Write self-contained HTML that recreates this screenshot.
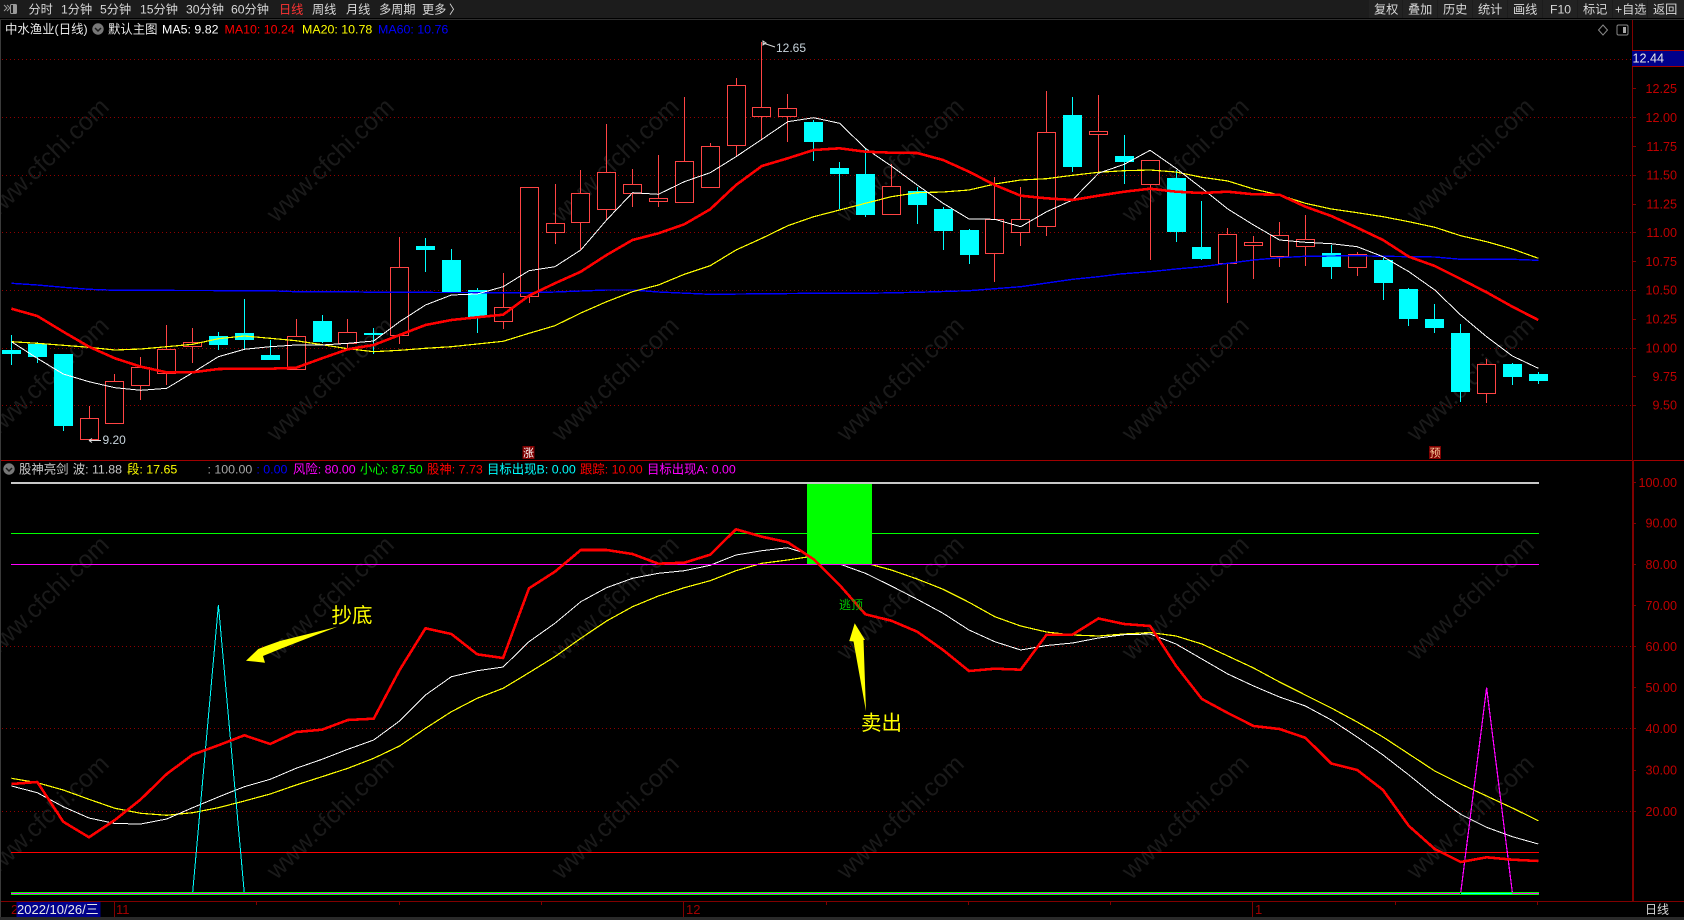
<!DOCTYPE html>
<html lang="zh">
<head>
<meta charset="utf-8">
<title>中水渔业 日线</title>
<style>
html,body{margin:0;padding:0;background:#000;width:1684px;height:920px;overflow:hidden}
svg{display:block;position:absolute;left:0;top:0}
text{font-family:"Liberation Sans","Noto Sans CJK SC",sans-serif;font-size:12px;white-space:pre}
.t text{fill:#d8d8d8;font-size:12.2px}
.ax text{fill:#c00000;font-size:12.6px;text-anchor:end}
.wm text{fill:#1a1a1a;font-size:25px;text-anchor:middle}
.ti text{font-size:12.4px}
</style>
</head>
<body>
<svg width="1684" height="920" viewBox="0 0 1684 920" xmlns="http://www.w3.org/2000/svg">
<rect width="1684" height="920" fill="#000"/>
<!-- watermark -->
<g class="wm">
<text transform="translate(51 166) rotate(-44)">www.cfchi.com</text>
<text transform="translate(336 166) rotate(-44)">www.cfchi.com</text>
<text transform="translate(621 166) rotate(-44)">www.cfchi.com</text>
<text transform="translate(906 166) rotate(-44)">www.cfchi.com</text>
<text transform="translate(1191 166) rotate(-44)">www.cfchi.com</text>
<text transform="translate(1476 166) rotate(-44)">www.cfchi.com</text>
<text transform="translate(51 385) rotate(-44)">www.cfchi.com</text>
<text transform="translate(336 385) rotate(-44)">www.cfchi.com</text>
<text transform="translate(621 385) rotate(-44)">www.cfchi.com</text>
<text transform="translate(906 385) rotate(-44)">www.cfchi.com</text>
<text transform="translate(1191 385) rotate(-44)">www.cfchi.com</text>
<text transform="translate(1476 385) rotate(-44)">www.cfchi.com</text>
<text transform="translate(51 604) rotate(-44)">www.cfchi.com</text>
<text transform="translate(336 604) rotate(-44)">www.cfchi.com</text>
<text transform="translate(621 604) rotate(-44)">www.cfchi.com</text>
<text transform="translate(906 604) rotate(-44)">www.cfchi.com</text>
<text transform="translate(1191 604) rotate(-44)">www.cfchi.com</text>
<text transform="translate(1476 604) rotate(-44)">www.cfchi.com</text>
<text transform="translate(51 823) rotate(-44)">www.cfchi.com</text>
<text transform="translate(336 823) rotate(-44)">www.cfchi.com</text>
<text transform="translate(621 823) rotate(-44)">www.cfchi.com</text>
<text transform="translate(906 823) rotate(-44)">www.cfchi.com</text>
<text transform="translate(1191 823) rotate(-44)">www.cfchi.com</text>
<text transform="translate(1476 823) rotate(-44)">www.cfchi.com</text>
</g>
<!-- grid -->
<path d="M2 59.5H1632M2 117.5H1632M2 175.5H1632M2 232.5H1632M2 290.5H1632M2 348.5H1632M2 405.5H1632M2 646.5H1632M2 728.5H1632M2 811.5H1632" stroke="#900000" stroke-width="1" stroke-dasharray="1 3" fill="none" shape-rendering="crispEdges"/>
<!-- candles -->
<g shape-rendering="crispEdges">
<path fill="none" stroke="#00ffff" d="M11.5 335V365M37.5 342V363M63.5 354V431M218.5 332V350M244.5 299V349M270.5 340V360M322.5 315V343M373.5 328V354M425.5 238V272M451.5 249V293M477.5 288V333M813.5 120V161M839.5 162V209M865.5 148V217M917.5 187V224M943.5 207V250M969.5 229V264M1072.5 97V172M1124.5 135V184M1176.5 170V242M1201.5 201V260M1331.5 245V279M1383.5 258V300M1408.5 288V326M1434.5 304V333M1460.5 324V402M1512.5 363V385M1538.5 372V384"/>
<path fill="#00ffff" d="M2 350h19v4h-19zM28 344h19v13h-19zM54 354h19v72h-19zM209 336h19v9h-19zM235 333h19v7h-19zM261 355h19v5h-19zM313 321h19v21h-19zM364 333h19v2h-19zM416 246h19v4h-19zM442 260h19v33h-19zM468 290h19v27h-19zM804 122h19v20h-19zM830 168h19v6h-19zM856 174h19v41h-19zM908 191h19v14h-19zM934 209h19v22h-19zM960 230h19v25h-19zM1063 115h19v52h-19zM1115 156h19v6h-19zM1167 178h19v54h-19zM1192 247h19v12h-19zM1322 253h19v14h-19zM1374 260h19v23h-19zM1399 289h19v30h-19zM1425 319h19v9h-19zM1451 333h19v59h-19zM1503 364h19v13h-19zM1529 374h19v7h-19z"/>
<path fill="none" stroke="#ff4444" d="M89.5 406V439M114.5 374V423M140.5 357V400M166.5 325V385M192.5 328V363M296.5 319V369M347.5 319V349M399.5 237V344M503.5 273V329M529.5 187V303M555.5 184V244M580.5 170V250M606.5 124V220M632.5 169V207M658.5 155V207M684.5 97V202M710.5 143V187M736.5 78V157M761.5 42V140M787.5 94V142M891.5 164V214M994.5 177V282M1020.5 187V246M1046.5 91V236M1098.5 95V173M1150.5 160V260M1227.5 228V303M1253.5 236V279M1279.5 222V267M1305.5 215V266M1357.5 252V276M1486.5 359V403"/>
<path fill="#000" stroke="#ff4444" stroke-width="1" d="M80.5 418.5h18v21h-18zM105.5 381.5h18v42h-18zM131.5 367.5h18v18h-18zM157.5 349.5h18v24h-18zM183.5 342.5h18v4h-18zM287.5 336.5h18v33h-18zM338.5 332.5h18v11h-18zM390.5 267.5h18v68h-18zM494.5 307.5h18v14h-18zM520.5 187.5h18v109h-18zM546.5 223.5h18v9h-18zM571.5 193.5h18v29h-18zM597.5 172.5h18v37h-18zM623.5 184.5h18v9h-18zM649.5 198.5h18v3h-18zM675.5 161.5h18v41h-18zM701.5 146.5h18v41h-18zM727.5 85.5h18v60h-18zM752.5 107.5h18v9h-18zM778.5 108.5h18v8h-18zM882.5 186.5h18v28h-18zM985.5 219.5h18v34h-18zM1011.5 219.5h18v13h-18zM1037.5 132.5h18v94h-18zM1089.5 131.5h18v3h-18zM1141.5 160.5h18v24h-18zM1218.5 234.5h18v29h-18zM1244.5 242.5h18v3h-18zM1270.5 235.5h18v21h-18zM1296.5 239.5h18v7h-18zM1348.5 254.5h18v13h-18zM1477.5 364.5h18v29h-18z"/>
</g>
<!-- upper MAs -->
<g fill="none" stroke-linejoin="round" shape-rendering="crispEdges">
<polyline stroke="#0000ff" stroke-width="1.4" points="11.4,283.3 37.3,285 63.2,287.3 89,289.3 114.9,290.3 270,290.7 296,291.7 348,291.7 374,292.3 529,292.7 555,292 606.6,290 632.5,290 658.4,292 710.2,294.3 813.7,293.3 865.4,293.3 917.2,292.3 969,290.7 1020.7,286.7 1072.5,279.3 1098.4,276.7 1120,274 1150.1,271.7 1176,269 1201.9,266.7 1227.8,263.3 1253.6,260 1279.5,257.7 1305.4,256.3 1357.2,255.7 1383,256.3 1434.8,257 1460.7,259.3 1512.4,259.3 1538.3,260.3"/>
<polyline stroke="#ffff00" stroke-width="1.2" points="11.4,341.7 37.3,343.3 63.2,345.3 89,347.3 114.9,350 140.8,349 166.7,346.7 192.6,344.3 218.4,338.7 244.3,336 270.2,338.3 296.1,340.7 322,344.7 347.8,348.7 373.7,351.7 399.6,350.3 425.5,348.3 451.4,346.7 477.2,344 503.1,341.3 529,333.3 554.9,325.7 580.8,313 606.6,301.7 632.5,291.7 658.4,285 684.3,274.3 710.2,265.7 736,250 761.9,238.3 787.8,225.7 813.7,216.7 839.6,210 865.4,203.3 891.3,196.7 917.2,192.7 943.1,192 969,190 994.8,184 1020.7,180 1046.6,178.7 1072.5,175.3 1098.4,172.3 1124.2,170.7 1150.1,170 1176,172 1201.9,177.3 1227.8,181 1253.6,189 1279.5,195 1305.4,203.3 1331.3,209 1357.2,212.7 1383,216.7 1408.9,221.7 1434.8,227.3 1460.7,235.7 1486.6,241.7 1512.4,249 1538.3,258.3"/>
<polyline stroke="#ffffff" stroke-width="1" points="11.4,341.7 37.3,358.3 63.2,374 89,381.7 114.9,387.7 140.8,390.3 166.7,388.3 192.6,372.7 218.4,356.7 244.3,349.3 270.2,346.7 296.1,345 322,345 347.8,343.3 373.7,341 399.6,321.7 425.5,305 451.4,295 477.2,294 503.1,286.7 529,270.7 554.9,266.7 580.8,250 606.6,220 632.5,192.7 658.4,194.3 684.3,181.7 710.2,172.7 736,156.7 761.9,139.3 787.8,121.7 813.7,117.7 839.6,123.3 865.4,148.3 891.3,166 917.2,185 943.1,203.3 969,219 994.8,219.3 1020.7,226.7 1046.6,211.7 1072.5,200 1098.4,173.3 1124.2,164.3 1150.1,150.3 1176,168.3 1201.9,188.3 1227.8,209 1253.6,225 1279.5,240 1305.4,242.3 1331.3,243.7 1357.2,246.7 1383,256.7 1408.9,271.7 1434.8,290 1460.7,315 1486.6,336.7 1512.4,356 1538.3,368.3"/>
<polyline stroke="#ff0000" stroke-width="2.6" points="11.4,308.7 37.3,316 63.2,331.7 89,346.7 114.9,358.3 140.8,366.7 166.7,372.3 192.6,372.3 218.4,369 244.3,368.7 270.2,368.7 296.1,367.7 322,358.3 347.8,349.3 373.7,345 399.6,335 425.5,325 451.4,320 477.2,317.3 503.1,314.7 529,295.7 554.9,283.3 580.8,271.7 606.6,255 632.5,240 658.4,233.3 684.3,224.3 710.2,209.3 736,185 761.9,166 787.8,158.3 813.7,150 839.6,148.3 865.4,151.7 891.3,152.7 917.2,153 943.1,160 969,171.7 994.8,185 1020.7,195.7 1046.6,198.3 1072.5,200 1098.4,195.7 1124.2,191.7 1150.1,188.7 1176,191.7 1201.9,193 1227.8,191.7 1253.6,194.3 1279.5,194.7 1305.4,206.7 1331.3,216 1357.2,227.7 1383,240 1408.9,256.7 1434.8,266 1460.7,279 1486.6,292.3 1512.4,306.7 1538.3,320"/>
</g>
<!-- hi/lo labels -->
<path d="M766 43l-3 -2v4zM763 43l12 4" stroke="#d8d8d8" fill="none"/>
<text x="776" y="52" fill="#c8d4dc">12.65</text>
<path d="M89 440.5H101M89 440.5l3 -2M89 440.5l3 2" stroke="#e0e0e0" fill="none"/>
<text x="102.5" y="444" fill="#c8d4dc">9.20</text>
<!-- markers -->
<rect x="522.5" y="446" width="12" height="13" fill="#800000"/>
<text x="523" y="456.5" fill="#fff" style="font-size:11px">涨</text>
<rect x="1429" y="446" width="12" height="13" fill="#800000"/>
<text x="1429.5" y="456.5" fill="#ffd0a0" style="font-size:11px">预</text>
<!-- lower pane -->
<g shape-rendering="crispEdges" fill="none">
<path stroke="#c8c8c8" stroke-width="2" d="M11 483H1539"/>
<path stroke="#00ff00" stroke-width="1" d="M11 533.5H1539"/>
<polyline stroke="#ffff00" stroke-width="1.2" points="11.4,778.3 37.3,782.7 63.2,790 89,799.3 114.9,808.3 140.8,813.3 166.7,815.3 192.6,812.7 218.4,807.7 244.3,801 270.2,794 296.1,785 322,776.7 347.8,768.3 373.7,758.3 399.6,746 425.5,728.3 451.4,711.7 477.2,698.3 503.1,688.3 529,672.7 554.9,656.7 580.8,638.3 606.6,621 632.5,606.7 658.4,596 684.3,587.7 710.2,580.7 736,570.7 761.9,563.3 787.8,560 813.7,556 839.6,558 865.4,563 891.3,570 917.2,579 943.1,589.3 969,602.3 994.8,616.7 1020.7,626 1046.6,632 1072.5,635 1098.4,636 1124.2,634 1150.1,632.5 1176,636 1201.9,644 1227.8,656 1253.6,668 1279.5,682 1305.4,695 1331.3,708 1357.2,722 1383,737 1408.9,754 1434.8,771 1460.7,784 1486.6,796 1512.4,808 1538.3,820.7"/>
<polyline stroke="#ffffff" stroke-width="1" points="11.4,786 37.3,792.7 63.2,806.7 89,818 114.9,823.5 140.8,824 166.7,819 192.6,807.7 218.4,797 244.3,786.7 270.2,779.3 296.1,768.3 322,759.3 347.8,749.3 373.7,740 399.6,721 425.5,695 451.4,676.7 477.2,670.7 503.1,667 529,641.7 554.9,623.3 580.8,601.7 606.6,587.7 632.5,578.3 658.4,573.3 684.3,570.7 710.2,565.3 736,555 761.9,550.7 787.8,547.7 813.7,556 839.6,564 865.4,573.3 891.3,586 917.2,599.3 943.1,613.3 969,630 994.8,641.7 1020.7,650 1046.6,645.5 1072.5,643 1098.4,638 1124.2,634.7 1150.1,634 1176,644 1201.9,659 1227.8,674 1253.6,686 1279.5,697 1305.4,706 1331.3,720 1357.2,737 1383,755 1408.9,775 1434.8,796 1460.7,814.3 1486.6,827.3 1512.4,836.7 1538.3,844"/>
<rect x="807" y="484" width="65" height="80" fill="#00ff00"/>
<path stroke="#ff00ff" stroke-width="1" d="M11 564.5H1539"/>
<path stroke="#ff0000" stroke-width="1" d="M11 852.5H1539"/>
<polyline stroke="#00ffff" stroke-width="1" points="192.6,893 218.4,605 244.3,893"/>
<polyline stroke="#ff00ff" stroke-width="1.2" points="1460.7,893 1486.6,687.8 1512.4,893"/>
<polyline stroke="#ff0000" stroke-width="2.6" stroke-linejoin="round" points="11.4,784 37.3,782 63.2,821.7 89,837.3 114.9,820 140.8,799.3 166.7,774 192.6,754.7 218.4,745.3 244.3,735.3 270.2,744 296.1,732 322,729.7 347.8,720 373.7,718.7 399.6,670 425.5,628.3 451.4,634 477.2,654.3 503.1,658 529,588.3 554.9,571.7 580.8,550 606.6,550 632.5,554 658.4,563.7 684.3,562.7 710.2,554.7 736,529.3 761.9,536.7 787.8,542.3 813.7,559.3 839.6,585 865.4,614.3 891.3,620.7 917.2,631.7 943.1,650 969,671 994.8,668.7 1020.7,669.7 1046.6,634.6 1072.5,634.6 1098.4,618.5 1124.2,624 1150.1,626 1176,665.8 1201.9,699 1227.8,713 1253.6,726 1279.5,729 1305.4,737.8 1331.3,763.5 1357.2,770 1383,790 1408.9,826 1434.8,849 1460.7,862 1486.6,857.3 1512.4,859.7 1538.3,861"/>
<path stroke="#00ff00" stroke-width="1" d="M11 892.5H1539M11 894.5H1539"/>
<path stroke="#ff00ff" stroke-width="1" d="M11 893.5H1460"/>
<path stroke="#00ffff" stroke-width="1" d="M1461 893.5H1512"/>
<path stroke="#ff00ff" stroke-width="1" d="M1512 893.5H1539"/>
</g>
<!-- annotations -->
<text x="839" y="609" fill="#00c800" style="font-size:12px">逃顶</text>
<polygon fill="#ffff00" points="337.3,626.7 280,641 266,646 258.3,649 246,660.7 265,662.7 263,656 280,649"/>
<polygon fill="#ffff00" points="854.7,623.3 849.3,641 853.5,641.5 866,711.3 863.5,640 865,640"/>
<text x="331.5" y="622.5" fill="#ffff00" style="font-size:20.5px">抄底</text>
<text x="861" y="730" fill="#ffff00" style="font-size:20.5px">卖出</text>
<!-- axes -->
<g shape-rendering="crispEdges" fill="none">
<path stroke="#a00000" d="M0 460.5H1684"/>
<path stroke="#800000" d="M1632.5 20V901M0 901.5H1684"/>
<path stroke="#800000" stroke-width="1" d="M1633.5 460V901M1632 88.5h4M1632 117.5h4M1632 146.5h4M1632 175.5h4M1632 204.5h4M1632 232.5h4M1632 261.5h4M1632 290.5h4M1632 319.5h4M1632 348.5h4M1632 376.5h4M1632 405.5h4M1632 482.5h4M1632 523.5h4M1632 564.5h4M1632 605.5h4M1632 646.5h4M1632 687.5h4M1632 728.5h4M1632 770.5h4M1632 811.5h4"/>
<path stroke="#3a3a3a" d="M0.5 20V917"/>
</g>
<g class="ax">
<text x="1677" y="93">12.25</text><text x="1677" y="122">12.00</text><text x="1677" y="151">11.75</text><text x="1677" y="179.500">11.50</text><text x="1677" y="208.500">11.25</text><text x="1677" y="237">11.00</text><text x="1677" y="266">10.75</text><text x="1677" y="294.500">10.50</text><text x="1677" y="323.500">10.25</text><text x="1677" y="352.500">10.00</text><text x="1677" y="381">9.75</text><text x="1677" y="409.500">9.50</text>
<text x="1677" y="487">100.00</text><text x="1677" y="527.500">90.00</text><text x="1677" y="569">80.00</text><text x="1677" y="610">70.00</text><text x="1677" y="651">60.00</text><text x="1677" y="692">50.00</text><text x="1677" y="733">40.00</text><text x="1677" y="774.500">30.00</text><text x="1677" y="816">20.00</text>
</g>
<rect x="1632" y="50" width="52" height="16" fill="#00008b"/>
<path d="M1632 50.500H1684M1632 66.500H1684" stroke="#a00000" shape-rendering="crispEdges"/>
<text x="1632.5" y="62.500" fill="#e8e8e8" style="font-size:12.6px">12.44</text>
<!-- top bar -->
<rect x="0" y="0" width="1684" height="18" fill="#1c1c1c"/>
<rect x="0" y="18" width="1684" height="2" fill="#000"/>
<path d="M0 19.500H1684" stroke="#2e2e2e" shape-rendering="crispEdges"/>
<g fill="#141414">
<rect x="1369" y="0" width="33" height="18" fill="#222"/><rect x="1403" y="0" width="34" height="18" fill="#222"/><rect x="1438" y="0" width="34" height="18" fill="#222"/><rect x="1473" y="0" width="34" height="18" fill="#222"/><rect x="1508" y="0" width="34" height="18" fill="#222"/><rect x="1543" y="0" width="34" height="18" fill="#222"/><rect x="1578" y="0" width="34" height="18" fill="#222"/><rect x="1613" y="0" width="34" height="18" fill="#222"/><rect x="1648" y="0" width="36" height="18" fill="#222"/>
</g>
<g fill="none" stroke="#999">
<path d="M4 5l3 3l-3 3M7 5l3 3l-3 3" />
<rect x="10.500" y="4.500" width="6" height="9" rx="1"/>
<rect x="13" y="5" width="3" height="8" fill="#999" stroke="none"/>
</g>
<g class="t">
<text x="28.500" y="13.500">分时</text>
<text x="61" y="13.500">1分钟</text>
<text x="100" y="13.500">5分钟</text>
<text x="140" y="13.500">15分钟</text>
<text x="186" y="13.500">30分钟</text>
<text x="231" y="13.500">60分钟</text>
<text x="279" y="13.500" style="fill:#ff3333">日线</text>
<text x="312" y="13.500">周线</text>
<text x="346" y="13.500">月线</text>
<text x="379" y="13.500">多周期</text>
<text x="422" y="13.500">更多</text>
<text x="449" y="13.500">〉</text>
<text x="1374" y="13.500">复权</text>
<text x="1408" y="13.500">叠加</text>
<text x="1443" y="13.500">历史</text>
<text x="1478" y="13.500">统计</text>
<text x="1513" y="13.500">画线</text>
<text x="1550" y="13.500">F10</text>
<text x="1583" y="13.500">标记</text>
<text x="1615" y="13.500">+自选</text>
<text x="1653" y="13.500">返回</text>
</g>
<!-- title row -->
<g class="ti">
<text x="5" y="33.500" fill="#e8e8e8">中水渔业(日线)</text>
<circle cx="98" cy="29" r="5.700" fill="#777"/>
<path d="M95 28l3 3l3 -3" stroke="#1c1c1c" stroke-width="1.500" fill="none"/>
<text x="108" y="33.500" fill="#e8e8e8">默认主图</text>
<text x="162" y="33.500" fill="#ffffff">MA5: 9.82</text>
<text x="224.500" y="33.500" fill="#ff0000">MA10: 10.24</text>
<text x="302" y="33.500" fill="#ffff00">MA20: 10.78</text>
<text x="378" y="33.500" fill="#0000ff">MA60: 10.76</text>
</g>
<path d="M1603 25l4.500 5l-4.500 5l-4.500 -5z" fill="none" stroke="#888"/>
<rect x="1617" y="25" width="11" height="10" rx="1.500" fill="none" stroke="#888"/>
<rect x="1623" y="27" width="3" height="6" fill="#aaa"/>
<!-- lower title row -->
<g class="ti">
<circle cx="9" cy="469" r="5.700" fill="#777"/>
<path d="M6 468l3 3l3 -3" stroke="#1c1c1c" stroke-width="1.500" fill="none"/>
<text x="19" y="473.300" fill="#c8c8c8">股神亮剑</text>
<text x="72.700" y="473.300" fill="#c8c8c8">波: 11.88</text>
<text x="127" y="473.300" fill="#ffff00">段: 17.65</text>
<text x="207.500" y="473.300" fill="#a8a8a8">: 100.00</text>
<text x="256.400" y="473.300" fill="#0000ff">: 0.00</text>
<text x="293" y="473.300" fill="#ff00ff">风险: 80.00</text>
<text x="360" y="473.300" fill="#00ff00">小心: 87.50</text>
<text x="427" y="473.300" fill="#ff0000">股神: 7.73</text>
<text x="487" y="473.300" fill="#00ffff">目标出现B: 0.00</text>
<text x="580" y="473.300" fill="#ff0000">跟踪: 10.00</text>
<text x="647" y="473.300" fill="#ff00ff">目标出现A: 0.00</text>
</g>
<!-- bottom axis -->
<g shape-rendering="crispEdges" fill="none" stroke="#800000">
<path d="M114.500 901V917M683.500 901V917M1252.500 901V917M256.500 901v4M399.500 901v4M541.500 901v4M826.500 901v4M968.500 901v4M1110.500 901v4M1395.500 901v4M1537.500 901v4"/>
</g>
<text x="11" y="914" fill="#a00000" style="font-size:13px">2</text>
<rect x="16.500" y="902" width="84" height="15" fill="#00008b"/>
<text x="17" y="914" fill="#e8e8e8" style="font-size:13px">2022/10/26/三</text>
<text x="116" y="914" fill="#a00000" style="font-size:13px">11</text>
<text x="686" y="914" fill="#a00000" style="font-size:13px">12</text>
<text x="1255" y="914" fill="#a00000" style="font-size:13px">1</text>
<text x="1645" y="913.500" fill="#d8d8d8" style="font-size:12px">日线</text>
<rect x="0" y="917" width="1684" height="3" fill="#2a2a2a"/>
</svg>
</body>
</html>
